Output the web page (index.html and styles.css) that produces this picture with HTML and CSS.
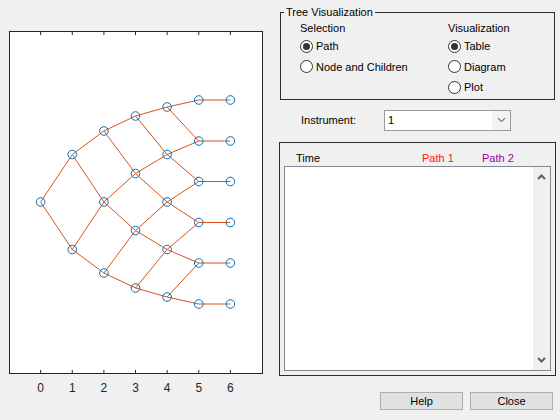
FILE: index.html
```html
<!DOCTYPE html>
<html>
<head>
<meta charset="utf-8">
<link rel="stylesheet" href="styles.css">
</head>
<body>
<div class="window">
  <svg class="plot" width="279" height="420" viewBox="0 0 279 420">
    <rect class="axes" x="9.5" y="31.5" width="253" height="342"/>
    <g class="ticks">
      <path d="M40.6 373V370 M72.25 373V370 M103.9 373V370 M135.5 373V370 M167.1 373V370 M198.75 373V370 M230.4 373V370 M40.6 32V35 M72.25 32V35 M103.9 32V35 M135.5 32V35 M167.1 32V35 M198.75 32V35 M230.4 32V35"/>
    </g>
    <g class="ticklabels">
      <text x="40.6" y="392">0</text>
      <text x="72.25" y="392">1</text>
      <text x="103.9" y="392">2</text>
      <text x="135.5" y="392">3</text>
      <text x="167.1" y="392">4</text>
      <text x="198.75" y="392">5</text>
      <text x="230.4" y="392">6</text>
    </g>
    <path class="edges" d="M40.6 202L72.25 154.5 M40.6 202L72.25 249.5
M72.25 154.5L103.9 131 M72.25 154.5L103.9 202 M72.25 249.5L103.9 202 M72.25 249.5L103.9 273
M103.9 131L135.5 116 M103.9 131L135.5 173.5 M103.9 202L135.5 173.5 M103.9 202L135.5 230.5 M103.9 273L135.5 230.5 M103.9 273L135.5 288
M135.5 116L167.1 107 M135.5 116L167.1 154.5 M135.5 173.5L167.1 154.5 M135.5 173.5L167.1 202 M135.5 230.5L167.1 202 M135.5 230.5L167.1 249.5 M135.5 288L167.1 249.5 M135.5 288L167.1 297
M167.1 107L198.75 100 M167.1 107L198.75 141 M167.1 154.5L198.75 141 M167.1 154.5L198.75 181.5 M167.1 202L198.75 181.5 M167.1 202L198.75 222.5 M167.1 249.5L198.75 222.5 M167.1 249.5L198.75 263 M167.1 297L198.75 263 M167.1 297L198.75 304
M198.75 100H230.4 M198.75 141H230.4 M198.75 181.5H230.4 M198.75 222.5H230.4 M198.75 263H230.4 M198.75 304H230.4"/>
    <g class="nodes">
      <circle cx="40.6" cy="202" r="4.3"/>
      <circle cx="72.25" cy="154.5" r="4.3"/>
      <circle cx="72.25" cy="249.5" r="4.3"/>
      <circle cx="103.9" cy="131" r="4.3"/>
      <circle cx="103.9" cy="202" r="4.3"/>
      <circle cx="103.9" cy="273" r="4.3"/>
      <circle cx="135.5" cy="116" r="4.3"/>
      <circle cx="135.5" cy="173.5" r="4.3"/>
      <circle cx="135.5" cy="230.5" r="4.3"/>
      <circle cx="135.5" cy="288" r="4.3"/>
      <circle cx="167.1" cy="107" r="4.3"/>
      <circle cx="167.1" cy="154.5" r="4.3"/>
      <circle cx="167.1" cy="202" r="4.3"/>
      <circle cx="167.1" cy="249.5" r="4.3"/>
      <circle cx="167.1" cy="297" r="4.3"/>
      <circle cx="198.75" cy="100" r="4.3"/>
      <circle cx="198.75" cy="141" r="4.3"/>
      <circle cx="198.75" cy="181.5" r="4.3"/>
      <circle cx="198.75" cy="222.5" r="4.3"/>
      <circle cx="198.75" cy="263" r="4.3"/>
      <circle cx="198.75" cy="304" r="4.3"/>
      <circle cx="230.4" cy="100" r="4.3"/>
      <circle cx="230.4" cy="141" r="4.3"/>
      <circle cx="230.4" cy="181.5" r="4.3"/>
      <circle cx="230.4" cy="222.5" r="4.3"/>
      <circle cx="230.4" cy="263" r="4.3"/>
      <circle cx="230.4" cy="304" r="4.3"/>
    </g>
  </svg>

  <div class="side">
    <fieldset class="group">
      <legend>Tree Visualization</legend>
      <div class="cols">
        <div class="col col-sel">
          <div class="heading">Selection</div>
          <div class="radio-row"><span class="radio checked"></span><span>Path</span></div>
          <div class="radio-row"><span class="radio"></span><span>Node and Children</span></div>
        </div>
        <div class="col">
          <div class="heading">Visualization</div>
          <div class="radio-row"><span class="radio checked"></span><span>Table</span></div>
          <div class="radio-row"><span class="radio"></span><span>Diagram</span></div>
          <div class="radio-row"><span class="radio"></span><span>Plot</span></div>
        </div>
      </div>
    </fieldset>

    <div class="inst">
      <span class="inst-label">Instrument:</span>
      <div class="select">
        <span class="select-value">1</span>
        <span class="select-arrow">
          <svg width="9" height="6" viewBox="0 0 9 6"><path d="M1 1.2L4.5 4.6L8 1.2" fill="none" stroke="#6a6a6a" stroke-width="1.1"/></svg>
        </span>
      </div>
    </div>

    <div class="panel">
      <div class="thead">
        <span class="th th-time">Time</span>
        <span class="th th-p1">Path 1</span>
        <span class="th th-p2">Path 2</span>
      </div>
      <div class="list">
        <div class="list-body"></div>
        <div class="scrollbar">
          <svg class="chev" width="9" height="6" viewBox="0 0 9 6"><path d="M1 5L4.5 1.5L8 5" fill="none" stroke="#606060" stroke-width="2"/></svg>
          <svg class="chev" width="9" height="6" viewBox="0 0 9 6"><path d="M1 1L4.5 4.5L8 1" fill="none" stroke="#606060" stroke-width="2"/></svg>
        </div>
      </div>
    </div>

    <div class="buttons">
      <button class="btn">Help</button>
      <button class="btn">Close</button>
    </div>
  </div>
</div>
</body>
</html>
```

FILE: styles.css
```css
html, body {
  margin: 0;
  padding: 0;
}
body {
  background: #f0f0f0;
  font-family: "Liberation Sans", Arial, sans-serif;
  font-size: 11px;
  color: #000;
}
.window {
  display: flex;
  width: 560px;
  height: 420px;
  overflow: hidden;
}
.plot {
  display: block;
  flex: none;
}
.axes {
  fill: #fff;
  stroke: #262626;
  stroke-width: 1;
}
.ticks path {
  stroke: #262626;
  stroke-width: 1;
  fill: none;
}
.ticklabels text {
  font-family: "Liberation Sans", Arial, sans-serif;
  font-size: 12px;
  fill: #262626;
  text-anchor: middle;
}
.edges {
  fill: none;
  stroke: #d95319;
  stroke-width: 1;
}
.nodes circle {
  fill: none;
  stroke: #0072bd;
  stroke-width: 1;
}

.side {
  flex: 1;
  display: flex;
  flex-direction: column;
}

.group {
  box-sizing: border-box;
  width: 275px;
  margin: 6px 0 0 1px;
  padding: 2px 0 1px 0;
  border: 1px solid #2b2b2b;
  min-width: 0;
}
.group legend {
  margin-left: 3px;
  padding: 0 2px;
  line-height: 13px;
  font-size: 11px;
}
.cols {
  display: flex;
  padding-left: 19px;
}
.col-sel {
  width: 148px;
}
.heading {
  height: 14px;
  line-height: 14px;
  margin-bottom: 1px;
}
.radio-row {
  display: flex;
  align-items: center;
  gap: 3px;
  height: 20.5px;
}
.radio {
  box-sizing: border-box;
  width: 13px;
  height: 13px;
  border: 1px solid #333;
  border-radius: 50%;
  background: #fff;
  display: flex;
  align-items: center;
  justify-content: center;
  flex: none;
}
.radio.checked::after {
  content: "";
  width: 7px;
  height: 7px;
  border-radius: 50%;
  background: #333;
}

.inst {
  display: flex;
  align-items: center;
  margin-top: 10px;
  padding-left: 22px;
  height: 21px;
}
.inst-label {
  width: 83px;
}
.select {
  box-sizing: border-box;
  width: 127px;
  height: 21px;
  border: 1px solid #9a9a9a;
  background: #fff;
  display: flex;
}
.select-value {
  flex: 1;
  padding-left: 3px;
  line-height: 19px;
}
.select-arrow {
  width: 18px;
  background: #f3f3f3;
  display: flex;
  align-items: center;
  justify-content: center;
}

.panel {
  box-sizing: border-box;
  width: 277px;
  height: 234px;
  margin-top: 11px;
  border: 1px solid #2b2b2b;
  display: flex;
  flex-direction: column;
  padding: 0 4px 4px 4px;
}
.thead {
  box-sizing: border-box;
  height: 23px;
  padding-top: 7px;
  padding-left: 12px;
  display: flex;
  align-items: center;
  flex: none;
}
.th-time { width: 126px; }
.th-p1 { width: 60px; color: #ff1a00; }
.th-p2 { color: #a000a0; }

.list {
  flex: 1;
  border: 1px solid #828790;
  background: #fff;
  display: flex;
}
.list-body {
  flex: 1;
}
.scrollbar {
  width: 17px;
  background: #f0f0f0;
  display: flex;
  flex-direction: column;
  justify-content: space-between;
  align-items: center;
  padding: 7px 0 7px 0;
}
.chev {
  display: block;
}

.buttons {
  display: flex;
  gap: 7px;
  margin-top: 16px;
  padding-left: 101px;
}
.btn {
  box-sizing: border-box;
  width: 83px;
  height: 18px;
  margin: 0;
  padding: 0;
  background: #e1e1e1;
  border: 1px solid #adadad;
  border-radius: 0;
  font-family: "Liberation Sans", Arial, sans-serif;
  font-size: 11px;
  color: #000;
  line-height: 16px;
}
```
